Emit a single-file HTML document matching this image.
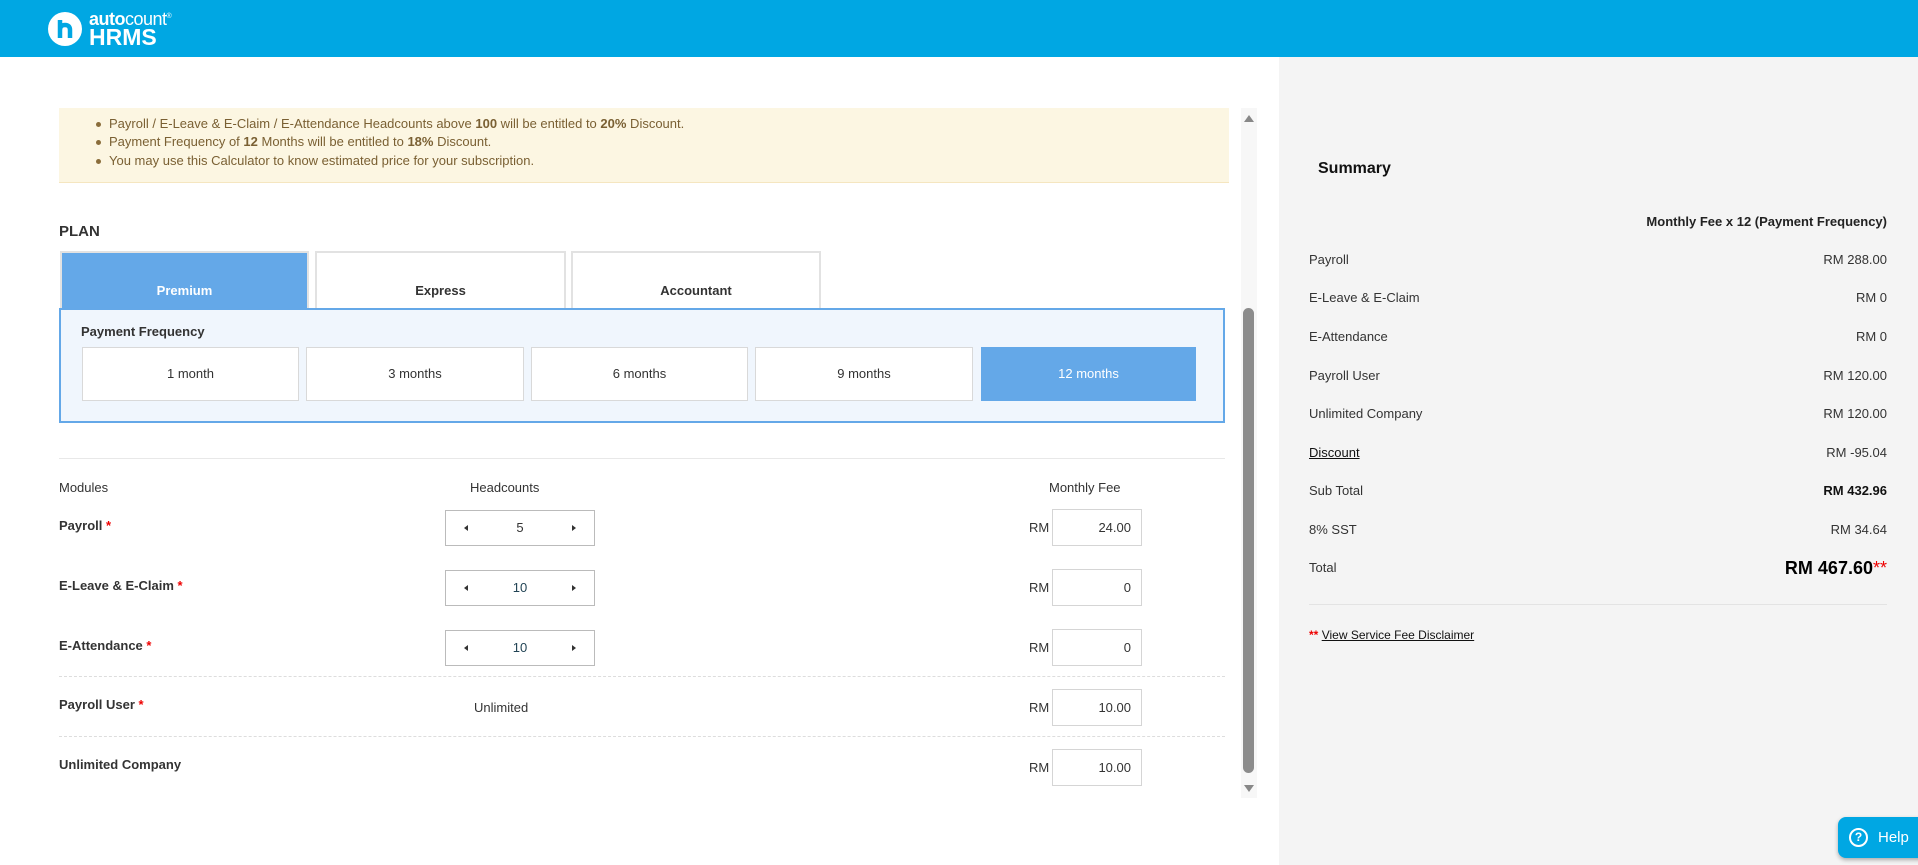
<!DOCTYPE html>
<html><head><meta charset="utf-8"><style>
*{box-sizing:border-box;margin:0;padding:0}
body{width:1918px;height:865px;overflow:hidden;background:#fff;font-family:"Liberation Sans",sans-serif;font-size:13px;color:#333;position:relative}
.a{position:absolute}
.hdr{left:0;top:0;width:1918px;height:57px;background:#00a7e3}
.yl{left:59px;top:108px;width:1170px;height:75px;background:#fcf6e2;border-bottom:1px solid #f5e6c0;color:#7a6033;font-size:13px}
.yl div{position:absolute;left:50px}
.yl div:before{content:"";position:absolute;left:-13px;top:6px;width:5px;height:5px;border-radius:50%;background:#8a6d3b}
.tab{top:251px;height:58px;border:2px solid #e2e2e2;border-bottom:none;background:#fff;font-weight:bold;text-align:center;line-height:76px;font-size:13px;color:#333}
.fr{left:59px;top:308px;width:1166px;height:115px;background:#f0f6fd;border:2px solid #64a8e8}
.btn{top:347px;height:54px;background:#fff;border:1px solid #d9d9d9;text-align:center;line-height:52px;color:#333}
.lbl{font-weight:bold;left:59px}
.st{color:#e00}
.stp{left:445px;width:150px;height:36px;border:1px solid #bbb;background:#fff;text-align:center;line-height:34px;font-size:13px}
.stp:before{content:"";position:absolute;left:18px;top:14px;border:3px solid transparent;border-right:4px solid #333;border-left:none}
.stp:after{content:"";position:absolute;right:18px;top:14px;border:3px solid transparent;border-left:4px solid #333;border-right:none}
.inp{left:1052px;width:90px;height:37px;border:1px solid #d5d5d5;background:#fff;text-align:right;padding-right:10px;line-height:35px}
.rm{left:1029px}
.sp{left:1279px;top:57px;width:639px;height:808px;background:#f4f4f4}
.sr{left:1309px;width:578px;font-size:13px}
.sr span{float:right}
</style></head><body>
<div class="a hdr"></div>
<svg class="a" style="left:46px;top:10px" width="38" height="38" viewBox="0 0 38 38"><circle cx="19" cy="19" r="17" fill="#fff"/><path d="M14 10v18M14 20q0-5 5-5t5 5v8" stroke="#00a7e3" stroke-width="4.5" fill="none"/></svg>
<div class="a" style="left:89px;top:7px;color:#fff;font-size:18px;letter-spacing:-0.5px;line-height:20px"><b>auto</b>count<sup style="font-size:7px">®</sup></div>
<div class="a" style="left:89px;top:24px;color:#fff;font-size:23px;font-weight:bold;line-height:26px">HRMS</div>

<div class="a yl"><div style="top:8px">Payroll / E-Leave &amp; E-Claim / E-Attendance Headcounts above <b>100</b> will be entitled to <b>20%</b> Discount.</div><div style="top:26px">Payment Frequency of <b>12</b> Months will be entitled to <b>18%</b> Discount.</div><div style="top:45px">You may use this Calculator to know estimated price for your subscription.</div></div>

<div class="a" style="left:1241px;top:108px;width:16px;height:690px;background:#f7f7f7"></div>
<div class="a" style="left:1243px;top:308px;width:11px;height:465px;background:#8c8c8c;border-radius:6px"></div>
<div class="a" style="left:1244px;top:115px;border:5px solid transparent;border-bottom:7px solid #888;border-top:none"></div>
<div class="a" style="left:1244px;top:785px;border:5px solid transparent;border-top:7px solid #888;border-bottom:none"></div>

<div class="a" style="left:59px;top:223px;font-weight:bold;font-size:15px">PLAN</div>
<div class="a tab" style="left:60px;width:249px;background:#64a8e8;color:#fff;border-color:#e2e2e2">Premium</div>
<div class="a tab" style="left:315px;width:251px">Express</div>
<div class="a tab" style="left:571px;width:250px">Accountant</div>
<div class="a fr"></div>
<div class="a" style="left:81px;top:324px;font-weight:bold">Payment Frequency</div>
<div class="a btn" style="left:82px;width:217px">1 month</div>
<div class="a btn" style="left:306px;width:218px">3 months</div>
<div class="a btn" style="left:531px;width:217px">6 months</div>
<div class="a btn" style="left:755px;width:218px">9 months</div>
<div class="a btn" style="left:981px;width:215px;background:#64a8e8;color:#fff;border-color:#64a8e8">12 months</div>

<div class="a" style="left:59px;top:458px;width:1166px;border-top:1px solid #e8e8e8"></div>
<div class="a" style="left:59px;top:480px">Modules</div>
<div class="a" style="left:470px;top:480px">Headcounts</div>
<div class="a" style="left:1049px;top:480px">Monthly Fee</div>

<div class="a lbl" style="top:518px">Payroll <span class="st">*</span></div>
<div class="a stp" style="top:510px">5</div>
<div class="a rm" style="top:520px">RM</div><div class="a inp" style="top:509px">24.00</div>

<div class="a lbl" style="top:578px">E-Leave &amp; E-Claim <span class="st">*</span></div>
<div class="a stp" style="top:570px;color:#245">10</div>
<div class="a rm" style="top:580px">RM</div><div class="a inp" style="top:569px">0</div>

<div class="a lbl" style="top:638px">E-Attendance <span class="st">*</span></div>
<div class="a stp" style="top:630px;color:#245">10</div>
<div class="a rm" style="top:640px">RM</div><div class="a inp" style="top:629px">0</div>

<div class="a" style="left:59px;top:676px;width:1166px;border-top:1px dashed #ddd"></div>
<div class="a lbl" style="top:697px">Payroll User <span class="st">*</span></div>
<div class="a" style="left:474px;top:700px">Unlimited</div>
<div class="a rm" style="top:700px">RM</div><div class="a inp" style="top:689px">10.00</div>
<div class="a" style="left:59px;top:736px;width:1166px;border-top:1px dashed #ddd"></div>
<div class="a lbl" style="top:757px">Unlimited Company</div>
<div class="a rm" style="top:760px">RM</div><div class="a inp" style="top:749px">10.00</div>

<div class="a sp"></div>
<div class="a" style="left:1318px;top:160px;font-weight:bold;font-size:16px;color:#111">Summary</div>
<div class="a sr" style="top:214px;text-align:right;font-weight:bold;color:#222">Monthly Fee x 12 (Payment Frequency)</div>
<div class="a sr" style="top:252px">Payroll<span>RM 288.00</span></div>
<div class="a sr" style="top:290px">E-Leave &amp; E-Claim<span>RM 0</span></div>
<div class="a sr" style="top:329px">E-Attendance<span>RM 0</span></div>
<div class="a sr" style="top:368px">Payroll User<span>RM 120.00</span></div>
<div class="a sr" style="top:406px">Unlimited Company<span>RM 120.00</span></div>
<div class="a sr" style="top:445px"><u style="color:#111">Discount</u><span>RM -95.04</span></div>
<div class="a sr" style="top:483px">Sub Total<span style="font-weight:bold;color:#111">RM 432.96</span></div>
<div class="a sr" style="top:522px">8% SST<span>RM 34.64</span></div>
<div class="a sr" style="top:560px">Total<span style="font-weight:bold;font-size:18px;color:#000;margin-top:-2px">RM 467.60<span style="color:#e00;float:none;font-weight:normal">**</span></span></div>
<div class="a" style="left:1309px;top:604px;width:578px;border-top:1px solid #e3e3e3"></div>
<div class="a" style="left:1309px;top:628px;font-size:12px;color:#111"><b style="color:#e00">**</b> <u>View Service Fee Disclaimer</u></div>

<div class="a" style="left:1838px;top:817px;width:85px;height:41px;background:#00a7e3;border-radius:8px 0 0 8px;box-shadow:0 2px 4px rgba(0,0,0,.3);color:#fff;font-size:15px;line-height:41px;padding-left:40px">Help</div>
<div class="a" style="left:1849px;top:828px;width:19px;height:19px;border:2.5px solid #fff;border-radius:50%;color:#fff;font-size:12px;font-weight:bold;text-align:center;line-height:14px">?</div>
</body></html>
